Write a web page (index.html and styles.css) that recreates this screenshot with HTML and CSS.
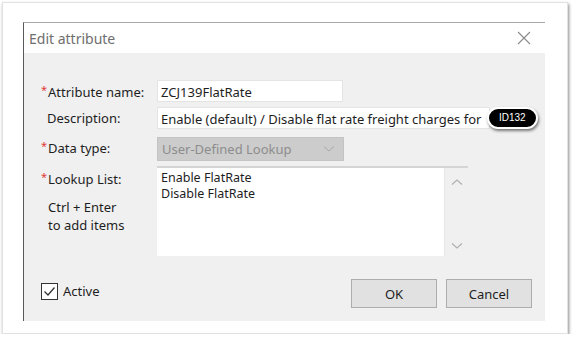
FILE: index.html
```html
<!DOCTYPE html>
<html lang="en">
<head>
  <meta charset="UTF-8">
  <meta name="viewport" content="width=device-width, initial-scale=1.0">
  <title>Edit attribute</title>
  <link rel="stylesheet" href="styles.css">
</head>
<body>
  <div class="frame">
    <div class="dialog">
      <div class="titlebar">
        <span class="title">Edit attribute</span>
        <svg class="close" width="14" height="14" viewBox="0 0 14 14">
          <path d="M1 1 L13 13 M13 1 L1 13" stroke="#8a8a8a" stroke-width="1.1" fill="none"/>
        </svg>
      </div>
      <div class="content">
        <div class="form">
          <label class="lbl"><span class="req">*</span>Attribute name:</label>
          <div class="field name">ZCJ139FlatRate</div>

          <label class="lbl">Description:</label>
          <div class="desc-wrap">
            <div class="field desc">Enable (default) / Disable flat rate freight charges for</div>
            <span class="badge">ID132</span>
          </div>

          <label class="lbl"><span class="req">*</span>Data type:</label>
          <div class="select">
            <span>User-Defined Lookup</span>
            <svg width="12" height="8" viewBox="0 0 12 8"><path d="M1 1.5 L6 6 L11 1.5" stroke="#a8a8a8" stroke-width="1" fill="none"/></svg>
          </div>

          <div class="lbl-stack">
            <label class="lbl"><span class="req">*</span>Lookup List:</label>
            <p class="hint">Ctrl + Enter<br>to add items</p>
          </div>
          <div class="list">
            <div class="list-items">
              <div>Enable FlatRate</div>
              <div>Disable FlatRate</div>
            </div>
            <div class="scroll">
              <svg width="12" height="8" viewBox="0 0 12 8"><path d="M1 6.5 L6 2 L11 6.5" stroke="#b0b0b0" stroke-width="1.2" fill="none"/></svg>
              <svg width="12" height="8" viewBox="0 0 12 8"><path d="M1 1.5 L6 6 L11 1.5" stroke="#b0b0b0" stroke-width="1.2" fill="none"/></svg>
            </div>
          </div>
        </div>

        <div class="footer">
          <label class="check">
            <svg width="17" height="17" viewBox="0 0 17 17">
              <rect x="0.5" y="0.5" width="16" height="16" fill="#fff" stroke="#333"/>
              <path d="M3.5 8.5 L7 12 L13.5 4.5" stroke="#333" stroke-width="1.3" fill="none"/>
            </svg>
            Active
          </label>
          <div class="buttons">
            <button class="btn">OK</button>
            <button class="btn">Cancel</button>
          </div>
        </div>
      </div>
    </div>
  </div>
</body>
</html>
```

FILE: styles.css
```css
body {
  margin: 0;
  background: #fff;
  font-family: "Noto Sans", "Open Sans", sans-serif;
  font-size: 13px;
  color: #1e1e1e;
}
.frame {
  margin: 2px 0 0 2px;
  width: 566px;
  height: 332px;
  box-sizing: border-box;
  border: 1px solid #e2e2e2;
  box-shadow: 1px 2px 3px rgba(0, 0, 0, 0.45);
  padding: 19px 0 0 20px;
}
.dialog {
  width: 521px;
  height: 298px;
  border-left: 1px solid #5a5a5a;
  border-top: 1px solid #a8a8a8;
  background: #f0f0f0;
  display: flex;
  flex-direction: column;
}
.titlebar {
  height: 30px;
  background: #fff;
  display: flex;
  align-items: center;
  justify-content: space-between;
  padding: 0 14px 0 5px;
}
.title {
  font-size: 14px;
  color: #6e6e6e;
}
.close {
  display: block;
}
.content {
  flex: 1;
  display: flex;
  flex-direction: column;
  padding: 27px 0 0 17px;
}
.form {
  display: grid;
  grid-template-columns: 116px auto;
  row-gap: 5px;
  align-items: center;
}
.lbl {
  white-space: nowrap;
}
.req {
  color: #e03a3a;
  font-size: 11px;
  vertical-align: 3px;
  margin-right: 1px;
}
.form > .lbl:nth-of-type(2) {
  padding-left: 6px;
}
.field {
  background: #fff;
  height: 22px;
  line-height: 22px;
  padding: 0 3px;
  box-sizing: border-box;
  border: 1px solid #e4e4e4;
  white-space: nowrap;
  overflow: hidden;
}
.name {
  width: 186px;
}
.desc-wrap {
  position: relative;
  width: 333px;
}
.desc {
  width: 333px;
}
.badge {
  position: absolute;
  left: 330px;
  top: 0;
  height: 22px;
  line-height: 18px;
  padding: 0 10px;
  box-sizing: border-box;
  border: 2px solid #fff;
  border-radius: 11px;
  background: #000;
  color: #fff;
  font-family: "Liberation Sans", Arial, sans-serif;
  font-size: 10px;
  box-shadow: 1px 2px 3px rgba(0, 0, 0, 0.5);
}
.select {
  width: 187px;
  height: 24px;
  margin-top: 3px;
  box-sizing: border-box;
  background: #cccccc;
  border: 1px solid #c4c4c4;
  color: #8c8c8c;
  display: flex;
  align-items: center;
  justify-content: space-between;
  padding: 0 8px 0 4px;
}
.lbl-stack {
  align-self: start;
  padding-top: 3px;
}
.hint {
  margin: 10px 0 0 7px;
  line-height: 18px;
}
.list {
  width: 311px;
  height: 90px;
  box-sizing: border-box;
  border-top: 2px solid #d4d4d4;
  background: #fff;
  display: flex;
}
.list-items {
  flex: 1;
  padding: 2px 4px;
  font-size: 12.5px;
  line-height: 16px;
}
.scroll {
  width: 23px;
  background: #f0f0f0;
  border-left: 1px solid #e6e6e6;
  display: flex;
  flex-direction: column;
  justify-content: space-between;
  align-items: center;
  padding: 10px 0 6px;
}
.footer {
  display: flex;
  justify-content: space-between;
  align-items: center;
  padding: 23px 13px 0 0;
}
.check {
  display: flex;
  align-items: center;
  gap: 5px;
  margin-top: -5px;
  line-height: 16px;
}
.check svg {
  display: block;
}
.buttons {
  display: flex;
  gap: 9px;
}
.btn {
  width: 86px;
  height: 29px;
  background: #e1e1e1;
  border: 1px solid #adadad;
  font-family: inherit;
  font-size: 13px;
  color: #1e1e1e;
  padding: 0;
}
```
